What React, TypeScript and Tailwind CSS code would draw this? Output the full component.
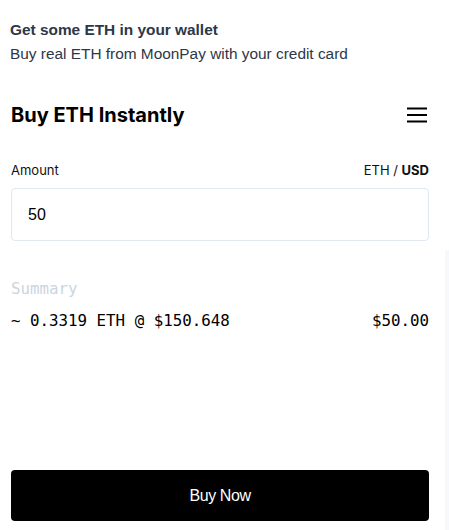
export default function App() {
  return (
    <div className="flex h-[530px] w-[449px] bg-white font-['Liberation_Sans',Arial,sans-serif]">
      <main className="flex flex-1 flex-col">
        <section className="px-[10px] pt-[20px]">
          <h2 className="text-[15.4px] font-bold leading-[20px] text-[#2d3748]">Get some ETH in your wallet</h2>
          <p className="mt-[4px] text-[15.4px] leading-[20px] text-[#2d3748]">Buy real ETH from MoonPay with your credit card</p>
        </section>

        <section className="flex flex-1 flex-col pl-[11px] pr-[16px] pt-[39px] pb-[9px]">
          <header className="flex items-center justify-between">
            <h1 className="font-['Inter',sans-serif] text-[20px] font-bold leading-[24px] text-black">Buy ETH Instantly</h1>
            <button className="mr-[2px] text-black">
              <svg width="20" height="16" viewBox="0 0 20 16" fill="none" stroke="currentColor" strokeWidth="2">
                <path d="M0 1.5h20M0 8h20M0 14.5h20" />
              </svg>
            </button>
          </header>

          <div className="mt-[35px] flex items-center justify-between text-[13px] leading-[16px] text-[#111]">
            <span className="font-['Inter',sans-serif]">Amount</span>
            <span className="font-['Inter',sans-serif]">
              ETH / <b className="font-bold">USD</b>
            </span>
          </div>
          <input
            className="mt-[10px] h-[53px] w-full rounded-[4px] border border-[#e2e8f0] px-[16px] text-[16px] text-black outline-none"
            defaultValue="50"
          />

          <div className="mt-[38px] font-['DejaVu_Sans_Mono',monospace] text-[15.8px]">
            <div className="leading-[20px] text-[#cbd5e0]">Summary</div>
            <div className="mt-[12px] flex justify-between leading-[20px] text-black">
              <span>~ 0.3319 ETH @ $150.648</span>
              <span>$50.00</span>
            </div>
          </div>

          <div className="flex-1" />

          <button className="h-[51px] w-full rounded-[4px] bg-black text-[16px] tracking-[-0.4px] text-white">
            Buy Now
          </button>
        </section>
      </main>
      <div className="mt-[250px] w-[4px] bg-[#f7f8fc]" />
    </div>
  );
}
